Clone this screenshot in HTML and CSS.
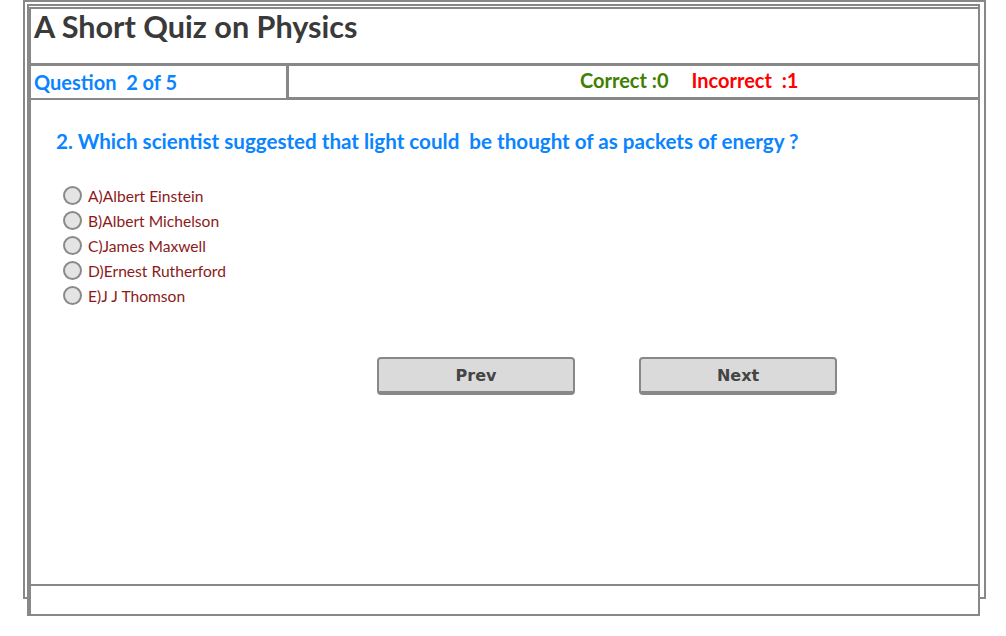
FILE: index.html
```html
<!DOCTYPE html>
<html>
<head>
<meta charset="utf-8">
<link rel="stylesheet" href="styles.css">
</head>
<body>
<div class="stack">
  <div class="frame"></div>
  <div class="page">
    <div class="header"><h1 class="title">A Short Quiz on Physics</h1></div>
    <div class="bar">
      <div class="bar-left">Question&nbsp; 2 of 5</div>
      <div class="bar-right"><span class="correct">Correct :0</span><span class="incorrect">Incorrect &nbsp;:1</span></div>
    </div>
    <div class="content">
      <p class="question">2. Which scientist suggested that light could &nbsp;be thought of as packets of energy ?</p>
      <ul class="options">
        <li class="option"><span class="radio"></span>A)Albert Einstein</li>
        <li class="option"><span class="radio"></span>B)Albert Michelson</li>
        <li class="option"><span class="radio"></span>C)James Maxwell</li>
        <li class="option"><span class="radio"></span>D)Ernest Rutherford</li>
        <li class="option"><span class="radio"></span>E)J J Thomson</li>
      </ul>
      <div class="nav">
        <button class="btn">Prev</button>
        <button class="btn">Next</button>
      </div>
    </div>
    <div class="footer"></div>
  </div>
</div>
</body>
</html>
```
FILE: styles.css
```css
html, body { margin: 0; padding: 0; background: #fff; }
body { font-family: Lato, "Open Sans", sans-serif; }

.stack {
  display: grid;
  width: 963px;
  margin-left: 23px;
}
.frame {
  grid-area: 1 / 1;
  width: 963px;
  height: 599px;
  border: 2px solid #888;
  box-sizing: border-box;
}
.page {
  grid-area: 1 / 1;
  margin: 4px 0 0 4px;
  width: 953px;
  height: 612px;
  border: 2px solid #888;
  box-sizing: border-box;
  background: #fff;
  display: flex;
  flex-direction: column;
}
.header {
  flex: none;
  margin-top: 1px;
  height: 58px;
  border-top: 2px solid #888;
  border-left: 2px solid #888;
  border-bottom: 2px solid #888;
  box-sizing: border-box;
}
.title {
  margin: 0;
  padding: 0 0 0 3px;
  font-size: 30.6px;
  font-weight: 700;
  line-height: 35px;
  color: #3a3a3a;
}
.bar {
  flex: none;
  display: flex;
  height: 35px;
  border-left: 2px solid #888;
  box-sizing: border-box;
}
.bar-left {
  width: 258px;
  border-top: 1px solid #888;
  border-bottom: 2px solid #888;
  border-right: 3px solid #888;
  box-sizing: border-box;
  color: #0a84ff;
  font-weight: 700;
  font-size: 20px;
  padding: 4px 0 0 3px;
}
.bar-right {
  flex: 1;
  border-top: 1px solid #888;
  border-bottom: 3px solid #888;
  box-sizing: border-box;
  font-weight: 700;
  font-size: 20px;
  padding: 2px 0 0 291px;
}
.correct { color: #3f8000; margin-right: 23px; }
.incorrect { color: #ff0000; }

.content {
  flex: 1;
  border-left: 2px solid #888;
  border-bottom: 2px solid #888;
}
.question {
  margin: 29px 0 0 25px;
  color: #0a84ff;
  font-weight: 700;
  font-size: 20.6px;
}
.options {
  list-style: none;
  margin: 30px 0 0 32px;
  padding: 0;
}
.option {
  display: flex;
  align-items: center;
  height: 25px;
  color: #8b1a1a;
  font-size: 15.6px;
}
.radio {
  width: 15px;
  height: 15px;
  border: 2px solid #8a8a8a;
  border-radius: 50%;
  background: #e4e4e4;
  margin-right: 6px;
}
.nav {
  display: flex;
  gap: 64px;
  margin: 49px 0 0 346px;
}
.btn {
  width: 198px;
  height: 38px;
  background: #dadada;
  border: 2px solid #888;
  border-bottom-width: 4px;
  border-radius: 4px;
  font-family: "DejaVu Sans", sans-serif;
  font-weight: 700;
  font-size: 16px;
  color: #444;
  padding: 0;
}
.footer {
  flex: none;
  height: 28px;
  border-left: 2px solid #888;
}
```
